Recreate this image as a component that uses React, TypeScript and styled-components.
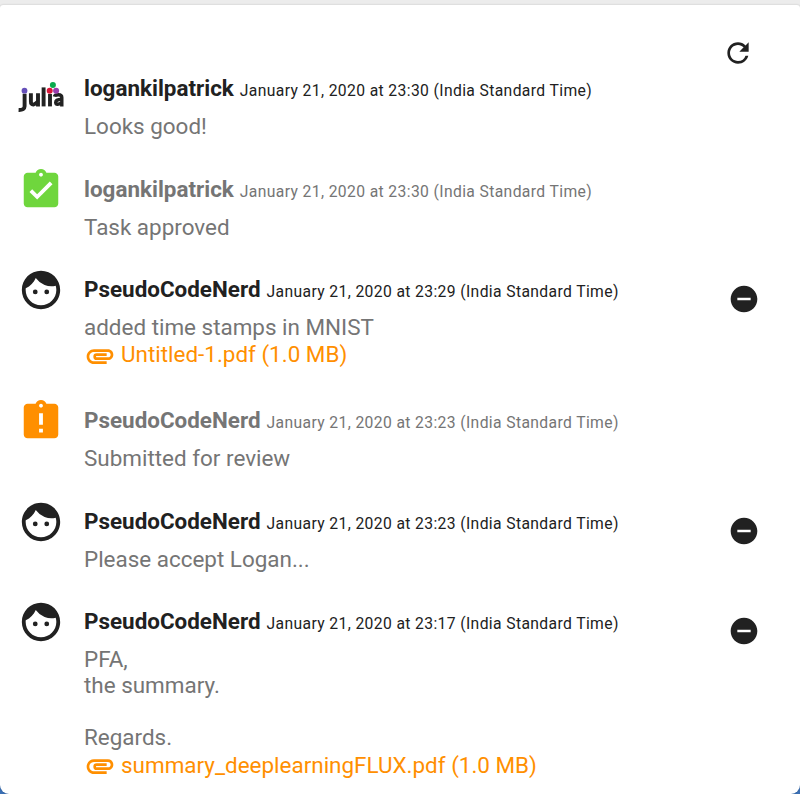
import React from 'react';
import styled, { createGlobalStyle } from 'styled-components';
import {
  MdAssignmentLate,
  MdAssignmentTurnedIn,
  MdAttachment,
  MdFace,
  MdRefresh,
  MdRemoveCircle,
} from 'react-icons/md';

const GlobalStyle = createGlobalStyle`
  * { box-sizing: border-box; }
  body { margin: 0; background: #ececec; font-family: Roboto, sans-serif; }
`;

const Page = styled.div`
  height: 794px;
  padding-top: 5px;
  overflow: hidden;
  background: linear-gradient(#ececec 0 400px, #3b70b5 400px);
`;

const Card = styled.main`
  height: 789px;
  background: #fff;
  border-radius: 3px 3px 9px 9px;
  box-shadow: 0 0 2px rgba(0, 0, 0, 0.22);
`;

const Toolbar = styled.header`
  display: flex;
  justify-content: flex-end;
  height: 61px;
  padding: 32px 46px 0 0;
`;

const IconButton = styled.button`
  display: block;
  width: 32px;
  height: 32px;
  padding: 0;
  border: 0;
  background: none;
  color: #212121;
  font-size: 32px;

  svg { display: block; }
`;

const Feed = styled.ul`
  margin: 0;
  padding: 0;
  list-style: none;
`;

const Row = styled.li<{ $height: number }>`
  display: grid;
  grid-template-columns: 46px 1fr 32px;
  column-gap: 20px;
  align-items: start;
  height: ${({ $height }) => $height}px;
  padding: 0 40px 0 18px;
`;

const Avatar = styled.div<{ $color: string }>`
  height: 46px;
  font-size: 46px;
  color: ${({ $color }) => $color};

  svg { display: block; }
`;

const Content = styled.div`
  padding-top: 9px;
`;

const Heading = styled.div<{ $muted: boolean }>`
  height: 37.9px;
  line-height: 26px;
  white-space: nowrap;
  color: ${({ $muted }) => ($muted ? '#757575' : '#212121')};
`;

const Author = styled.strong`
  font-size: 22.43px;
  font-weight: 700;
`;

const Stamp = styled.time`
  margin-left: 6px;
  font-size: 15.7px;
  letter-spacing: 0.37px;
`;

const Message = styled.p`
  margin: 0;
  font-size: 22.45px;
  line-height: 26.15px;
  white-space: pre-line;
  color: #757575;
`;

const Attachment = styled.a`
  display: flex;
  align-items: center;
  height: 28px;
  gap: 5px;
  font-size: 22.45px;
  white-space: nowrap;
  color: #ff8f00;

  svg { flex: none; font-size: 32px; margin-top: 3px; }
`;

const Remove = styled(IconButton)`
  margin-top: 16px;
`;

const JuliaLogo = () => (
  <svg width="46" height="46" viewBox="0 0 46 46" role="img" aria-label="julia">
    <g fill="none" stroke="#222" strokeWidth="3.9">
      <path d="M6.6 27.8V40.2Q6.6 44.2 0.6 44" />
      <path d="M12.9 27.2V35.4Q12.9 38.8 15.4 38.6Q17.8 38.2 20 35.6M20 27.2V40.4" />
      <path d="M25.6 21.4V40.4" />
      <path d="M32 28V40.4" />
      <path d="M36.4 30.6Q36.9 28.8 40.4 28.8Q43.8 28.8 43.8 31.6V40.4M43.8 33.2Q37.7 33.4 37.7 36.4Q38.2 40 43.8 36.8" strokeWidth="3.4" />
    </g>
    <circle cx="6.5" cy="24.7" r="2.9" fill="#6650b9" />
    <circle cx="34.9" cy="19.1" r="3" fill="#09aa4c" />
    <circle cx="31.7" cy="24.7" r="3" fill="#d9163a" />
    <circle cx="38.1" cy="24.7" r="3" fill="#9a3cad" />
  </svg>
);

type Kind = 'julia' | 'approved' | 'face' | 'submitted';

const avatars: Record<Kind, { color: string; icon: React.ReactNode }> = {
  julia: { color: '#212121', icon: <JuliaLogo /> },
  approved: { color: '#6fd63d', icon: <MdAssignmentTurnedIn /> },
  face: { color: '#212121', icon: <MdFace /> },
  submitted: { color: '#ff8f00', icon: <MdAssignmentLate /> },
};

interface Entry {
  kind: Kind;
  author: string;
  time: string;
  text: string;
  height: number;
  file?: string;
}

const entries: Entry[] = [
  { kind: 'julia', author: 'logankilpatrick', time: '23:30', text: 'Looks good!', height: 101 },
  { kind: 'approved', author: 'logankilpatrick', time: '23:30', text: 'Task approved', height: 100 },
  {
    kind: 'face',
    author: 'PseudoCodeNerd',
    time: '23:29',
    text: 'added time stamps in MNIST',
    height: 131,
    file: 'Untitled-1.pdf (1.0 MB)',
  },
  { kind: 'submitted', author: 'PseudoCodeNerd', time: '23:23', text: 'Submitted for review', height: 101 },
  { kind: 'face', author: 'PseudoCodeNerd', time: '23:23', text: 'Please accept Logan...', height: 100 },
  {
    kind: 'face',
    author: 'PseudoCodeNerd',
    time: '23:17',
    text: 'PFA,\nthe summary.\n\nRegards.',
    height: 195,
    file: 'summary_deeplearningFLUX.pdf (1.0 MB)',
  },
];

export default function App() {
  return (
    <Page>
      <GlobalStyle />
      <Card>
        <Toolbar>
          <IconButton aria-label="Refresh"><MdRefresh /></IconButton>
        </Toolbar>
        <Feed>
          {entries.map((entry, index) => (
            <Row key={index} $height={entry.height}>
              <Avatar $color={avatars[entry.kind].color}>{avatars[entry.kind].icon}</Avatar>
              <Content>
                <Heading $muted={entry.kind === 'approved' || entry.kind === 'submitted'}>
                  <Author>{entry.author}</Author>
                  <Stamp>January 21, 2020 at {entry.time} (India Standard Time)</Stamp>
                </Heading>
                <Message>{entry.text}</Message>
                {entry.file && (
                  <Attachment>
                    <MdAttachment />
                    {entry.file}
                  </Attachment>
                )}
              </Content>
              {entry.kind === 'face' && (
                <Remove aria-label="Remove comment"><MdRemoveCircle /></Remove>
              )}
            </Row>
          ))}
        </Feed>
      </Card>
    </Page>
  );
}
